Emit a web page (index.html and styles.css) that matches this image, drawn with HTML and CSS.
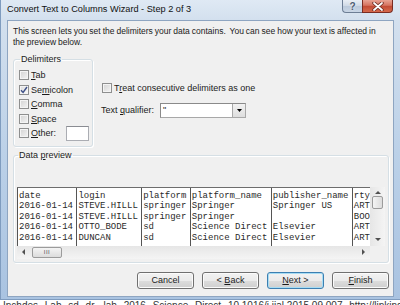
FILE: index.html
```html
<!DOCTYPE html>
<html lang="en">
<head>
    <meta charset="UTF-8">
    <title>Convert Text to Columns Wizard - Step 2 of 3</title>
    <link rel="stylesheet" href="styles.css">
</head>
<body>
    <div class="window">
        <div class="titlebar">
            <span class="title">Convert Text to Columns Wizard - Step 2 of 3</span>
            <div class="caption-buttons">
                <span class="cap-btn help">?</span>
                <span class="cap-btn close">
                    <svg width="12" height="9" viewBox="0 0 12 9">
                        <path d="M2 1 L10 8 M10 1 L2 8" stroke="#6b2a22" stroke-width="3.4" stroke-linecap="round"/>
                        <path d="M2 1 L10 8 M10 1 L2 8" stroke="#ffffff" stroke-width="1.8" stroke-linecap="round"/>
                    </svg>
                </span>
            </div>
        </div>

        <div class="client">
            <p class="intro">This screen lets you set the delimiters your data contains.&nbsp; You can see how your text is affected in<br>the preview below.</p>

            <div class="options">
                <fieldset class="group delimiters">
                    <legend>Delimiters</legend>
                    <label class="check"><span class="box"></span><span><u>T</u>ab</span></label>
                    <label class="check"><span class="box checked"><svg width="8" height="8" viewBox="0 0 8 8"><path d="M1 4.2 L3.1 6.5 L7 1" fill="none" stroke="#3d4f86" stroke-width="1.4"/></svg></span><span>Se<u>m</u>icolon</span></label>
                    <label class="check"><span class="box"></span><span><u>C</u>omma</span></label>
                    <label class="check"><span class="box"></span><span><u>S</u>pace</span></label>
                    <label class="check"><span class="box"></span><span><u>O</u>ther:</span><span class="textbox"></span></label>
                </fieldset>

                <div class="side">
                    <label class="check"><span class="box"></span><span>T<u>r</u>eat consecutive delimiters as one</span></label>
                    <div class="qualifier">
                        <span class="qualifier-label">Text <u>q</u>ualifier:</span>
                        <div class="select">
                            <span class="select-value">"</span>
                            <span class="drop"><svg width="5" height="3" viewBox="0 0 5 3"><path d="M0 0 H5 L2.5 3 Z" fill="#000"/></svg></span>
                        </div>
                    </div>
                </div>
            </div>

            <fieldset class="group preview">
                <legend>Data <u>p</u>review</legend>
                <div class="preview-box">
                    <div class="preview-main">
                        <div class="table">
                            <div class="col w11">date
2016-01-14
2016-01-14
2016-01-14
2016-01-14</div>
                            <div class="col w12">login
STEVE.HILLL
STEVE.HILLL
OTTO_BODE
DUNCAN</div>
                            <div class="col w9">platform
springer
springer
sd
sd</div>
                            <div class="col w15">platform_name
Springer
Springer
Science Direct
Science Direct</div>
                            <div class="col w15">publisher_name
Springer US

Elsevier
Elsevier</div>
                            <div class="col">rtype
ARTICLE
BOOK
ARTICLE
ARTICLE</div>
                        </div>
                        <div class="vscroll">
                            <span class="arrow up"></span>
                            <span class="vthumb"></span>
                            <span class="arrow down"></span>
                        </div>
                    </div>
                    <div class="preview-bottom">
                        <div class="hscroll">
                            <span class="arrow left"></span>
                            <span class="hthumb"><span class="grip">III</span></span>
                            <span class="arrow right"></span>
                        </div>
                        <div class="corner"></div>
                    </div>
                </div>
            </fieldset>

            <div class="buttons">
                <button class="btn">Cancel</button>
                <button class="btn">&lt; <u>B</u>ack</button>
                <button class="btn default"><u>N</u>ext &gt;</button>
                <button class="btn"><u>F</u>inish</button>
            </div>
        </div>
    </div>
    <div class="sheet">Inchdes Lab sd  dr. lab 2016    Science Direct  10.1016/j.ijal.2015.09.007    http://linkinghub.elsevier.com</div>
</body>
</html>
```

FILE: styles.css
```css
* {
    box-sizing: border-box;
}

body {
    margin: 0;
    width: 400px;
    height: 305px;
    overflow: hidden;
    background: #ffffff;
    font-family: 'Liberation Sans', Arial, sans-serif;
    font-size: 9px;
    color: #1b1b1b;
}

.window {
    width: 400px;
    height: 300px;
    display: flex;
    flex-direction: column;
    padding: 0 6px 3px 7px;
    background: linear-gradient(to bottom, #dfe9f4 0, #d3e0ee 20px, #bcd1e8 150px, #a9c3e1 100%);
    box-shadow: inset 1px 0 0 #7f9cbf, inset 0 -1px 0 #7f9cbf;
}

/* title bar */
.titlebar {
    height: 20px;
    display: flex;
    justify-content: space-between;
    align-items: flex-start;
}

.title {
    font-size: 9.2px;
    line-height: 18px;
    color: #111;
}

.caption-buttons {
    display: flex;
    margin-right: 1px;
}

.cap-btn {
    height: 13px;
    display: flex;
    align-items: center;
    justify-content: center;
    border: 1px solid #6d7e95;
    border-top: none;
}

.help {
    width: 20px;
    border-right: none;
    border-radius: 0 0 0 4px;
    background: linear-gradient(to bottom, #e9eef5, #cfd9e6 50%, #bccadb 51%, #c9d6e6);
    color: #4d5c72;
    font-size: 10px;
    font-weight: bold;
    text-shadow: 0 0 2px #fff;
}

.close {
    width: 31px;
    border-color: #7a2c22;
    border-radius: 0 0 4px 0;
    background: linear-gradient(to bottom, #e8a394, #d6735f 45%, #c24a34 50%, #d66a4c);
}

/* client area */
.client {
    flex: 1;
    min-width: 0;
    overflow: hidden;
    background: #f0f0f0;
    border: 1px solid #8ea5c1;
    padding: 0 4px 0 5px;
}

.intro {
    margin: 5px 0 0 0;
    font-size: 8.5px;
    word-spacing: -0.4px;
    line-height: 10.5px;
    white-space: nowrap;
}

.options {
    display: flex;
    margin-top: 7px;
}

.group {
    margin: 0;
    min-width: 0;
    border: 1px solid #d5dfe5;
    border-radius: 3px;
    box-shadow: 1px 1px 0 #ffffff, inset 1px 1px 0 #ffffff;
}

.group legend {
    padding: 0 1px;
    margin-left: 1px;
    line-height: 11px;
}

.delimiters {
    width: 80px;
    padding: 3px 0 5px 5px;
}

.check {
    height: 14.5px;
    display: flex;
    align-items: center;
    gap: 2px;
}

.box {
    width: 10px;
    height: 10px;
    flex: none;
    display: flex;
    align-items: center;
    justify-content: center;
    border: 1px solid #8e8f8f;
    background: linear-gradient(135deg, #d3d3d3, #f4f4f4);
    box-shadow: inset 0 0 0 1px #f4f4f4;
}

.box.checked {
    background: linear-gradient(135deg, #dcdcdc, #fafafa);
}

.textbox {
    width: 23px;
    height: 15px;
    margin-left: 8px;
    background: #fff;
    border: 1px solid #abadb3;
    border-top-color: #8a8c92;
}

.side {
    margin-left: 8px;
    padding-top: 27px;
}

.side .check {
    margin-left: 1px;
}

.qualifier {
    display: flex;
    align-items: center;
    margin-top: 7px;
}

.qualifier-label {
    width: 59px;
}

.select {
    width: 86px;
    height: 15px;
    display: flex;
    justify-content: space-between;
    background: #fff;
    border: 1px solid #7a7a7a;
    border-color: #8a8a8a #a8a8a8 #a8a8a8 #8a8a8a;
}

.select-value {
    padding-left: 2px;
    line-height: 13px;
}

.drop {
    width: 13px;
    display: flex;
    align-items: center;
    justify-content: center;
    border-left: 1px solid #a8a8a8;
    background: linear-gradient(to bottom, #f2f2f2, #dedede);
}

/* data preview */
.preview {
    margin-top: 3px;
    padding: 26px 3px 3px 3px;
}

.preview-box {
    display: flex;
    flex-direction: column;
}

.preview-main {
    display: flex;
    height: 59px;
}

.table {
    flex: 1;
    min-width: 0;
    display: flex;
    overflow: hidden;
    background: #fff;
    border-top: 1px solid #6d6d6d;
    font-family: 'Liberation Mono', 'Courier New', monospace;
    font-size: 9px;
    line-height: 10.5px;
    color: #2a2a2a;
}

.col {
    flex: none;
    white-space: pre;
    border-left: 1px solid #555;
    padding: 3px 0 0 1px;
}

.w9 { width: 9ch; }
.w11 { width: 11ch; }
.w12 { width: 12ch; }
.w15 { width: 15ch; }

.vscroll {
    width: 15px;
    flex: none;
    display: flex;
    flex-direction: column;
    align-items: center;
    background: linear-gradient(to right, #e6e6e6, #f4f4f4);
}

.vthumb {
    width: 11px;
    height: 13px;
    margin-top: 2px;
    border: 1px solid #9b9b9b;
    border-radius: 2px;
    background: linear-gradient(to right, #f4f4f4, #dcdcdc);
}

.arrow {
    width: 0;
    height: 0;
    border: 3px solid transparent;
}

.up {
    margin-top: 4px;
    border-top: none;
    border-bottom: 3px solid #505050;
}

.down {
    margin-top: auto;
    margin-bottom: 5px;
    border-bottom: none;
    border-top: 3px solid #505050;
}

.preview-bottom {
    display: flex;
    height: 13px;
}

.hscroll {
    flex: 1;
    display: flex;
    align-items: center;
    padding: 0 5px;
    background: linear-gradient(to bottom, #e6e6e6, #f4f4f4);
}

.left {
    border-left: none;
    border-right: 3px solid #505050;
}

.right {
    margin-left: auto;
    border-right: none;
    border-left: 3px solid #505050;
}

.hthumb {
    width: 30px;
    height: 11px;
    margin-left: 7px;
    display: flex;
    align-items: center;
    justify-content: center;
    border: 1px solid #9b9b9b;
    border-radius: 2px;
    background: linear-gradient(to bottom, #f4f4f4, #dcdcdc);
}

.grip {
    font-size: 6px;
    letter-spacing: 0.5px;
    color: #555;
}

.corner {
    width: 15px;
    background: #f0f0f0;
}

/* buttons */
.buttons {
    display: flex;
    justify-content: flex-end;
    gap: 8px;
    margin-top: 9px;
}

.btn {
    width: 57px;
    height: 17px;
    padding: 0;
    font-family: inherit;
    font-size: 9px;
    color: #1b1b1b;
    border: 1px solid #707070;
    border-radius: 3px;
    background: linear-gradient(to bottom, #f2f2f2 0, #ebebeb 50%, #dddddd 51%, #cfcfcf 100%);
    box-shadow: inset 0 0 0 1px #fbfbfb;
}

.btn.default {
    border-color: #3c7fb1;
    box-shadow: inset 0 0 0 1px #a6dcf4;
}

u {
    text-underline-offset: 1px;
}

/* worksheet showing under the dialog */
.sheet {
    height: 5px;
    overflow: hidden;
    padding: 1px 0 0 3px;
    white-space: nowrap;
    font-size: 10px;
    line-height: 10px;
    color: #333;
    word-spacing: 4px;
}
```
